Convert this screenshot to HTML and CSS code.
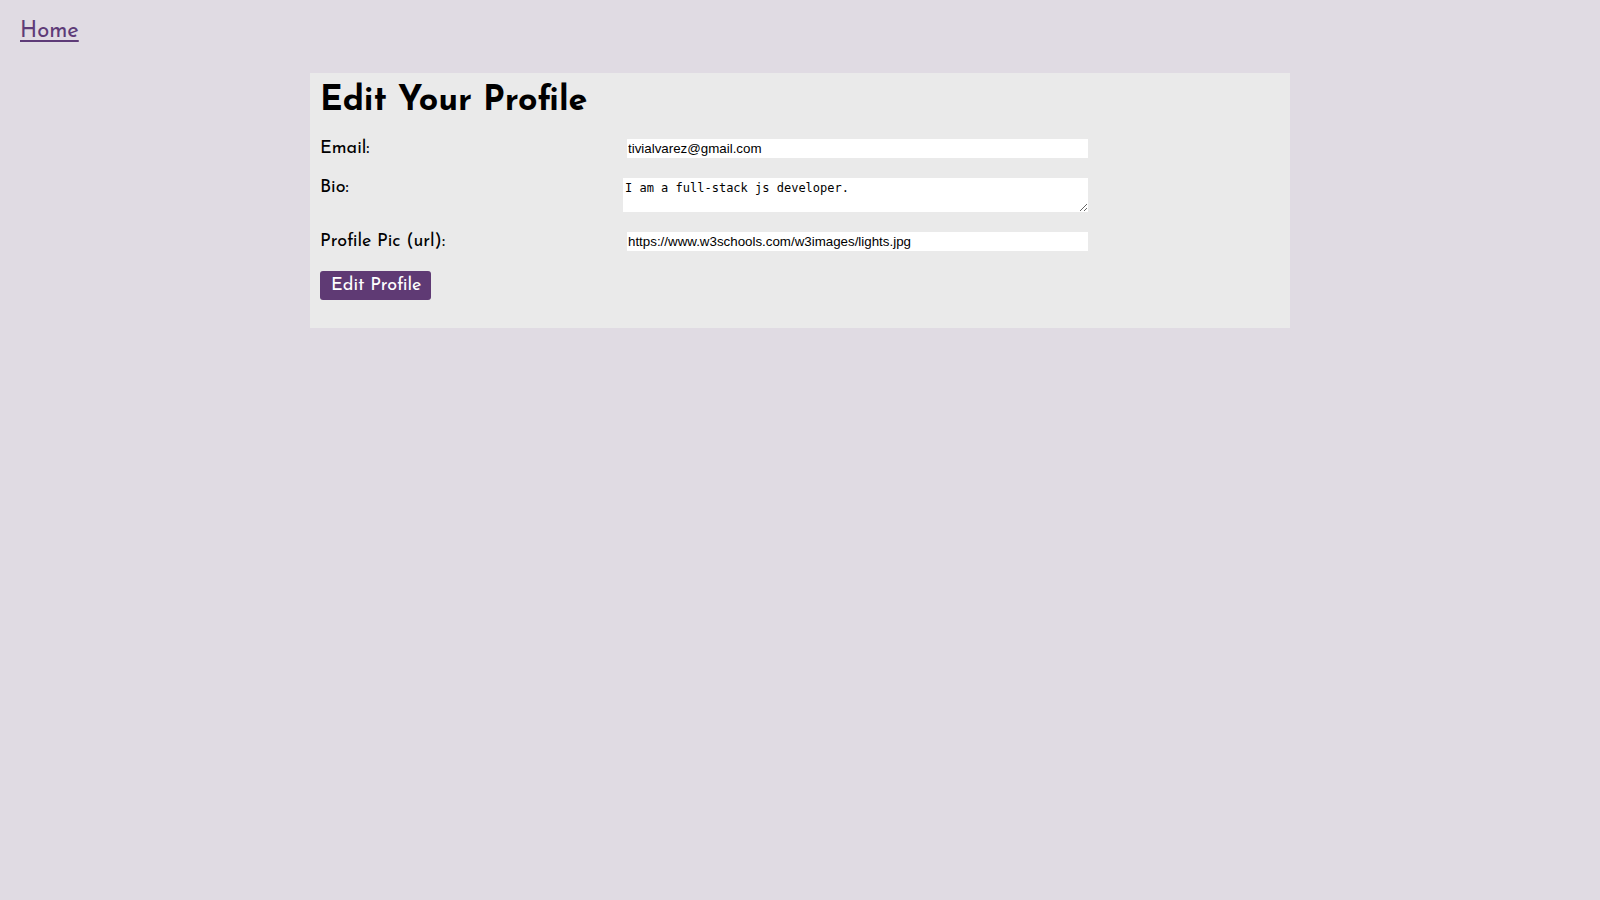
FILE: index.html
```html
<!DOCTYPE html>
<html>
<head>
<meta charset="utf-8">
<title>Edit Your Profile</title>
<link rel="stylesheet" href="styles.css">
</head>
<body>
<nav class="nav"><a class="home-link" href="#">Home</a></nav>
<main class="card">
  <h1 class="title">Edit Your Profile</h1>
  <form class="form">
    <div class="row">
      <label class="label" for="email">Email:</label>
      <input class="field field-input" id="email" type="text" value="tivialvarez@gmail.com">
    </div>
    <div class="row">
      <label class="label" for="bio">Bio:</label>
      <textarea class="field field-area" id="bio" rows="2">I am a full-stack js developer.</textarea>
    </div>
    <div class="row">
      <label class="label" for="pic">Profile Pic (url):</label>
      <input class="field field-input" id="pic" type="text" value="https://www.w3schools.com/w3images/lights.jpg">
    </div>
    <div class="actions">
      <button class="btn" type="button">Edit Profile</button>
    </div>
  </form>
</main>
</body>
</html>
```

FILE: styles.css
```css
html, body {
  margin: 0;
  padding: 0;
}
body {
  background: #e0dbe3;
  font-family: "Josefin Sans", Lato, "Open Sans", sans-serif;
  color: #000;
  min-height: 100vh;
}
.nav {
  padding: 20px 20px 0;
  height: 73px;
  box-sizing: border-box;
}
.home-link {
  font-size: 22px;
  font-weight: 400;
  color: #5e3b78;
  text-decoration: underline;
  text-underline-offset: 3px;
}
.card {
  width: 980px;
  margin: 0 0 0 310px;
  background: #eaeaea;
  padding: 0 10px 28px;
  box-sizing: border-box;
}
.title {
  margin: 0;
  padding-top: 3px;
  font-size: 34px;
  font-weight: 700;
  line-height: 51px;
}
.form {
  display: flex;
  flex-direction: column;
  gap: 20px;
  margin-top: 12px;
}
.row {
  display: grid;
  grid-template-columns: 303px 465px;
  align-items: start;
}
.label {
  font-size: 18px;
  font-weight: 380;
  line-height: 22px;
  margin: -1px 0 -5px;
}
.field {
  border: none;
  background: #fff;
  outline: none;
  box-sizing: border-box;
  color: #000;
}
.field-input {
  margin-left: 4px;
  width: 461px;
  height: 19px;
  padding: 1px;
  font-family: "Liberation Sans", Arial, sans-serif;
  font-size: 13.33px;
}
.field-area {
  width: 465px;
  height: 34px;
  padding: 2px;
  font-family: "DejaVu Sans Mono", "Liberation Mono", monospace;
  font-size: 12px;
  line-height: 16px;
}
.actions {
  display: flex;
}
.btn {
  background: #5f3a74;
  color: #fff;
  border: none;
  border-radius: 3px;
  font-family: inherit;
  font-size: 18px;
  font-weight: 400;
  height: 29px;
  padding: 0 10px 0 11px;
  cursor: pointer;
}
```
